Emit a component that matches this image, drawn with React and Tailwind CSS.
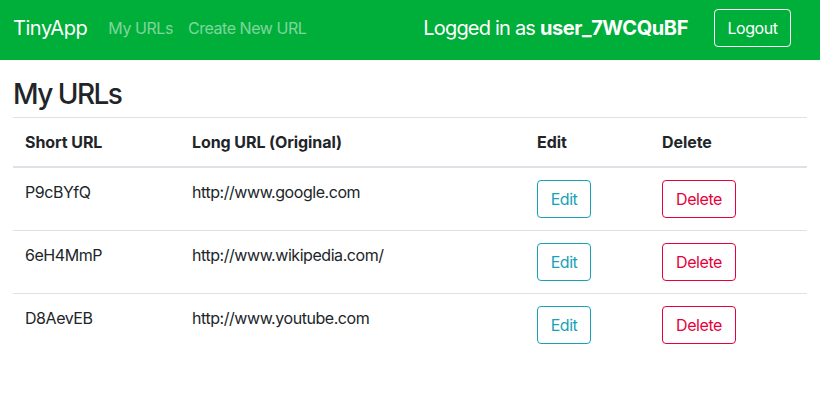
export default function App() {
  const rows = [
    ["P9cBYfQ", "http://www.google.com"],
    ["6eH4MmP", "http://www.wikipedia.com/"],
    ["D8AevEB", "http://www.youtube.com"],
  ];
  const th = "text-left font-bold p-[12px] border-t border-[#dee2e6] border-b-2 tracking-[-0.005em]";
  return (
    <div className="min-h-[415px] bg-white text-[#212529] font-['Inter','Liberation_Sans',sans-serif] text-[16px] leading-[24px] tracking-[-0.028em]">
      <nav className="h-[60px] bg-[#00ae3a] flex items-center pl-[13px] pr-[29px] pb-[4px]">
        <a className="text-white text-[20px] leading-[30px] mr-[13px]">TinyApp</a>
        <a className="text-white/50 px-[8px]">My URLs</a>
        <a className="text-white/50 px-[7px]">Create New URL</a>
        <div className="ml-auto flex items-center">
          <span className="text-white text-[20px] leading-[30px] tracking-[-0.04em]">
            Logged in as <b className="font-bold tracking-[-0.02em]">user_7WCQuBF</b>
          </span>
          <button className="ml-[26px] h-[38px] w-[77px] border border-white rounded-[4px] text-white text-[16px]">
            Logout
          </button>
        </div>
      </nav>
      <main className="px-[13px]">
        <h3 className="text-[28px] leading-[34px] font-medium mt-[17px] mb-[6px] tracking-[-0.055em]">My URLs</h3>
        <table className="w-full border-collapse">
          <thead>
            <tr>
              <th className={"w-[167px] " + th}>Short URL</th>
              <th className={"w-[345px] " + th}>Long URL (Original)</th>
              <th className={"w-[125px] " + th}>Edit</th>
              <th className={th}>Delete</th>
            </tr>
          </thead>
          <tbody>
            {rows.map(([s, l]) => (
              <tr key={s}>
                <td className="p-[12px] align-top border-t border-[#dee2e6]">{s}</td>
                <td className="p-[12px] align-top border-t border-[#dee2e6]">{l}</td>
                <td className="p-[12px] align-top border-t border-[#dee2e6]">
                  <button className="h-[38px] w-[54px] border border-[#17a2b8] text-[#17a2b8] rounded-[4px]">Edit</button>
                </td>
                <td className="p-[12px] align-top border-t border-[#dee2e6]">
                  <button className="h-[38px] w-[74px] border border-[#e6003c] text-[#e6003c] rounded-[4px]">Delete</button>
                </td>
              </tr>
            ))}
          </tbody>
        </table>
      </main>
    </div>
  );
}
